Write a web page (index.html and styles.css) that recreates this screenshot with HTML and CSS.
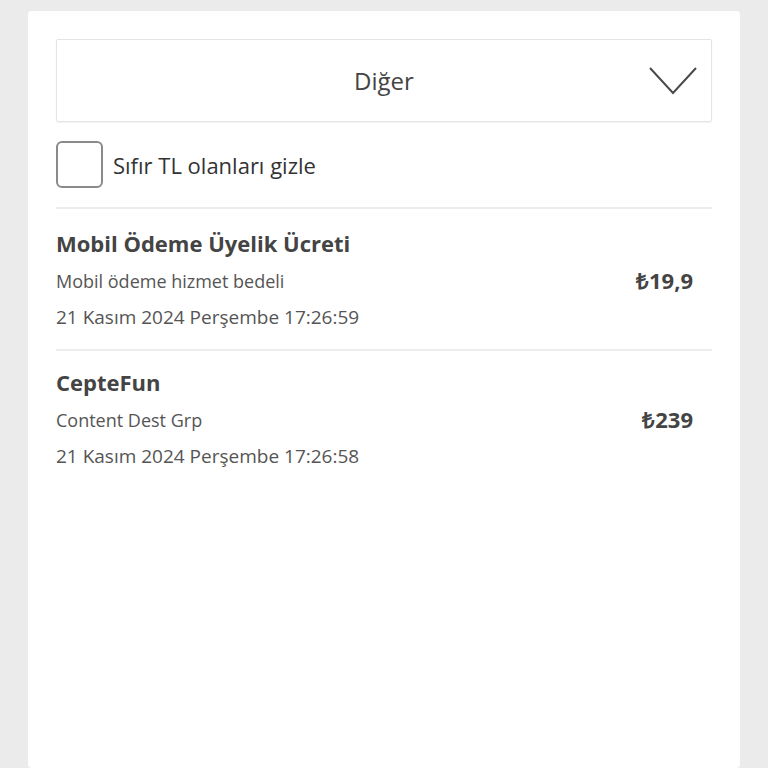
FILE: index.html
```html
<!DOCTYPE html>
<html>
<head>
  <meta charset="utf-8">
  <link rel="stylesheet" href="styles.css">
</head>
<body>
  <div class="card">
    <div class="select">
      <span class="select-value">Diğer</span>
      <svg class="chevron" width="48" height="28" viewBox="0 0 48 28">
        <polyline points="1,1 24,26 47,1" fill="none" stroke="#4a4a4a" stroke-width="2"/>
      </svg>
    </div>

    <label class="check-row">
      <span class="checkbox"></span>
      <span class="check-label">Sıfır TL olanları gizle</span>
    </label>

    <div class="item">
      <div class="item-info">
        <div class="item-title">Mobil Ödeme Üyelik Ücreti</div>
        <div class="item-sub">Mobil ödeme hizmet bedeli</div>
        <div class="item-date">21 Kasım 2024 Perşembe 17:26:59</div>
      </div>
      <div class="item-price">₺19,9</div>
    </div>

    <div class="item">
      <div class="item-info">
        <div class="item-title">CepteFun</div>
        <div class="item-sub">Content Dest Grp</div>
        <div class="item-date">21 Kasım 2024 Perşembe 17:26:58</div>
      </div>
      <div class="item-price">₺239</div>
    </div>
  </div>
</body>
</html>
```

FILE: styles.css
```css
body {
  margin: 0;
  height: 768px;
  overflow: hidden;
  background: #ebebeb;
  font-family: "Open Sans", sans-serif;
  color: #4a4a4a;
}

.card {
  margin: 11px 28px 0;
  min-height: 757px;
  background: white;
  border-radius: 4px;
  padding: 28px 28px 0;
  box-sizing: border-box;
}

.select {
  height: 83px;
  border: 1px solid #e4e4e4;
  border-radius: 2px;
  box-shadow: 0 1px 2px rgba(0, 0, 0, 0.06);
  box-sizing: border-box;
  display: flex;
  align-items: center;
  justify-content: center;
  position: relative;
}

.select-value {
  font-size: 24px;
  color: #444;
}

.chevron {
  position: absolute;
  right: 14px;
  top: 27px;
}

.check-row {
  display: flex;
  align-items: center;
  gap: 10px;
  margin-top: 19px;
  padding-bottom: 19px;
  border-bottom: 2px solid #ececec;
}

.checkbox {
  width: 47px;
  height: 47px;
  border: 2px solid #8a8a8a;
  border-radius: 6px;
  box-sizing: border-box;
}

.check-label {
  font-size: 22px;
  color: #333;
}

.item {
  display: flex;
  align-items: center;
  justify-content: space-between;
  padding: 16px 19px 14px 0;
  border-bottom: 2px solid #ececec;
}

.item + .item {
  padding-top: 13px;
}

.item:last-child {
  border-bottom: none;
}

.item-title {
  font-size: 22px;
  font-weight: 700;
  line-height: 36px;
  margin-bottom: 2px;
  color: #444;
}

.item-sub {
  font-size: 18px;
  line-height: 36px;
  color: #555;
}

.item-date {
  font-size: 19px;
  line-height: 36px;
  color: #555;
}

.item-price {
  font-size: 22px;
  font-weight: 700;
  color: #444;
}
```
